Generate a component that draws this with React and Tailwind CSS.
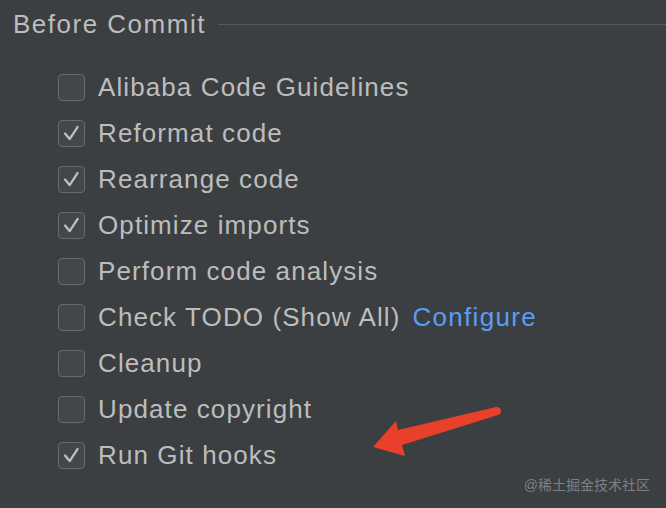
import React from "react";

const items = [
  { label: "Alibaba Code Guidelines", checked: false },
  { label: "Reformat code", checked: true },
  { label: "Rearrange code", checked: true },
  { label: "Optimize imports", checked: true },
  { label: "Perform code analysis", checked: false },
  { label: "Check TODO (Show All)", checked: false, link: "Configure" },
  { label: "Cleanup", checked: false },
  { label: "Update copyright", checked: false },
  { label: "Run Git hooks", checked: true },
];

const Checkbox = ({ checked }) => (
  <div className="w-[27px] h-[27px] shrink-0 rounded-[4px] border-[1.5px] border-[#686a6c] bg-[#43464a] flex items-center justify-center">
    {checked && (
      <svg width="27" height="27" viewBox="0 0 27 27" fill="none">
        <path
          d="M6.5 13.5 L11.5 19.5 L20 6.5"
          stroke="#c0c0c0"
          strokeWidth="2.4"
          strokeLinecap="round"
          strokeLinejoin="round"
        />
      </svg>
    )}
  </div>
);

const App = () => {
  return (
    <div
      className="relative w-[666px] h-[508px] overflow-hidden bg-[#3c3f41] text-[#bdbdbd]"
      style={{ fontFamily: '"Liberation Sans", Arial, sans-serif' }}
    >
      {/* Section header */}
      <div className="flex items-center h-[48px] pl-[13px]">
        <span className="text-[26px] tracking-[1.5px] leading-none whitespace-nowrap">
          Before Commit
        </span>
        <div className="flex-1 h-px bg-[#555759] ml-[12px]" />
      </div>

      {/* Options */}
      <div className="mt-[16px] pl-[58px] flex flex-col">
        {items.map((item) => (
          <div key={item.label} className="flex items-center h-[46px] gap-[13px]">
            <Checkbox checked={item.checked} />
            <span className="text-[26px] tracking-[1.1px] leading-none whitespace-nowrap">
              {item.label}
              {item.link && (
                <span className="ml-[12px] text-[#589df6] tracking-[1.3px]">{item.link}</span>
              )}
            </span>
          </div>
        ))}
      </div>

      {/* Red annotation arrow */}
      <svg
        className="absolute left-[360px] top-[395px]"
        width="150"
        height="70"
        viewBox="0 0 150 70"
      >
        <path
          d="M13 52 L36 26 L38 35 L136 12 Q141 12 141 16 Q141 19 138 20 L42 50 L45 61 Z"
          fill="#e8402b"
        />
      </svg>

      {/* Watermark */}
      <div
        className="absolute right-[16px] bottom-[16px] text-[14px] leading-none text-[#7d8083]"
        style={{ fontFamily: '"Liberation Sans", "Noto Sans CJK SC", sans-serif' }}
      >
        @稀土掘金技术社区
      </div>
    </div>
  );
};

export default App;
